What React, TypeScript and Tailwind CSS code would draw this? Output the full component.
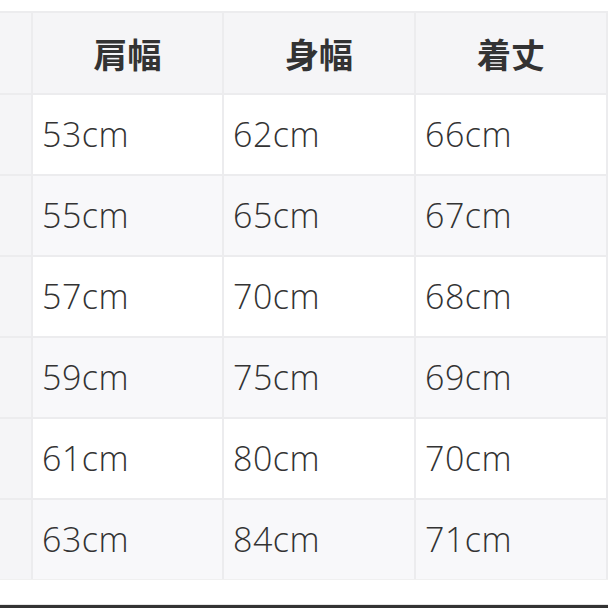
import React from "react";

const rows = [
  ["53cm", "62cm", "66cm"],
  ["55cm", "65cm", "67cm"],
  ["57cm", "70cm", "68cm"],
  ["59cm", "75cm", "69cm"],
  ["61cm", "80cm", "70cm"],
  ["63cm", "84cm", "71cm"],
];

const headers = ["肩幅", "身幅", "着丈"];

export default function App() {
  return (
    <div
      className="w-[608px] h-[608px] bg-white overflow-hidden flex flex-col"
      style={{ fontFamily: '"Noto Sans", "Noto Sans CJK JP", sans-serif' }}
    >
      <div className="h-[11px] bg-white" />
      <div className="border-t-2 border-[#ececee] bg-[#ececee] grid grid-cols-[31px_189px_190px_190px] gap-[2px] w-[608px]">
        <div className="h-[80px] bg-[#f5f5f7]" />
        {headers.map((h) => (
          <div
            key={h}
            className="h-[80px] bg-[#f5f5f7] flex items-center justify-center text-[34px] font-bold text-[#333333] font-['Noto_Sans_CJK_JP',sans-serif]"
          >
            {h}
          </div>
        ))}
        {rows.map((r, i) => (
          <React.Fragment key={i}>
            <div className="h-[79px] bg-[#f5f5f7]" />
            {r.map((c, j) => (
              <div
                key={j}
                className={`h-[79px] flex items-center pl-[9px] text-[34px] font-[350] tracking-[0.5px] text-[#333333] font-['Open_Sans',sans-serif] ${
                  i % 2 === 0 ? "bg-white" : "bg-[#f8f8fa]"
                }`}
              >
                {c}
              </div>
            ))}
          </React.Fragment>
        ))}
      </div>
      <div className="h-[1px] bg-[#f0f0f0]" />
      <div className="flex-1 bg-white" />
      <div className="h-[1px] bg-[#e6e6e6]" />
      <div className="h-[3px] bg-[#333333]" />
    </div>
  );
}
